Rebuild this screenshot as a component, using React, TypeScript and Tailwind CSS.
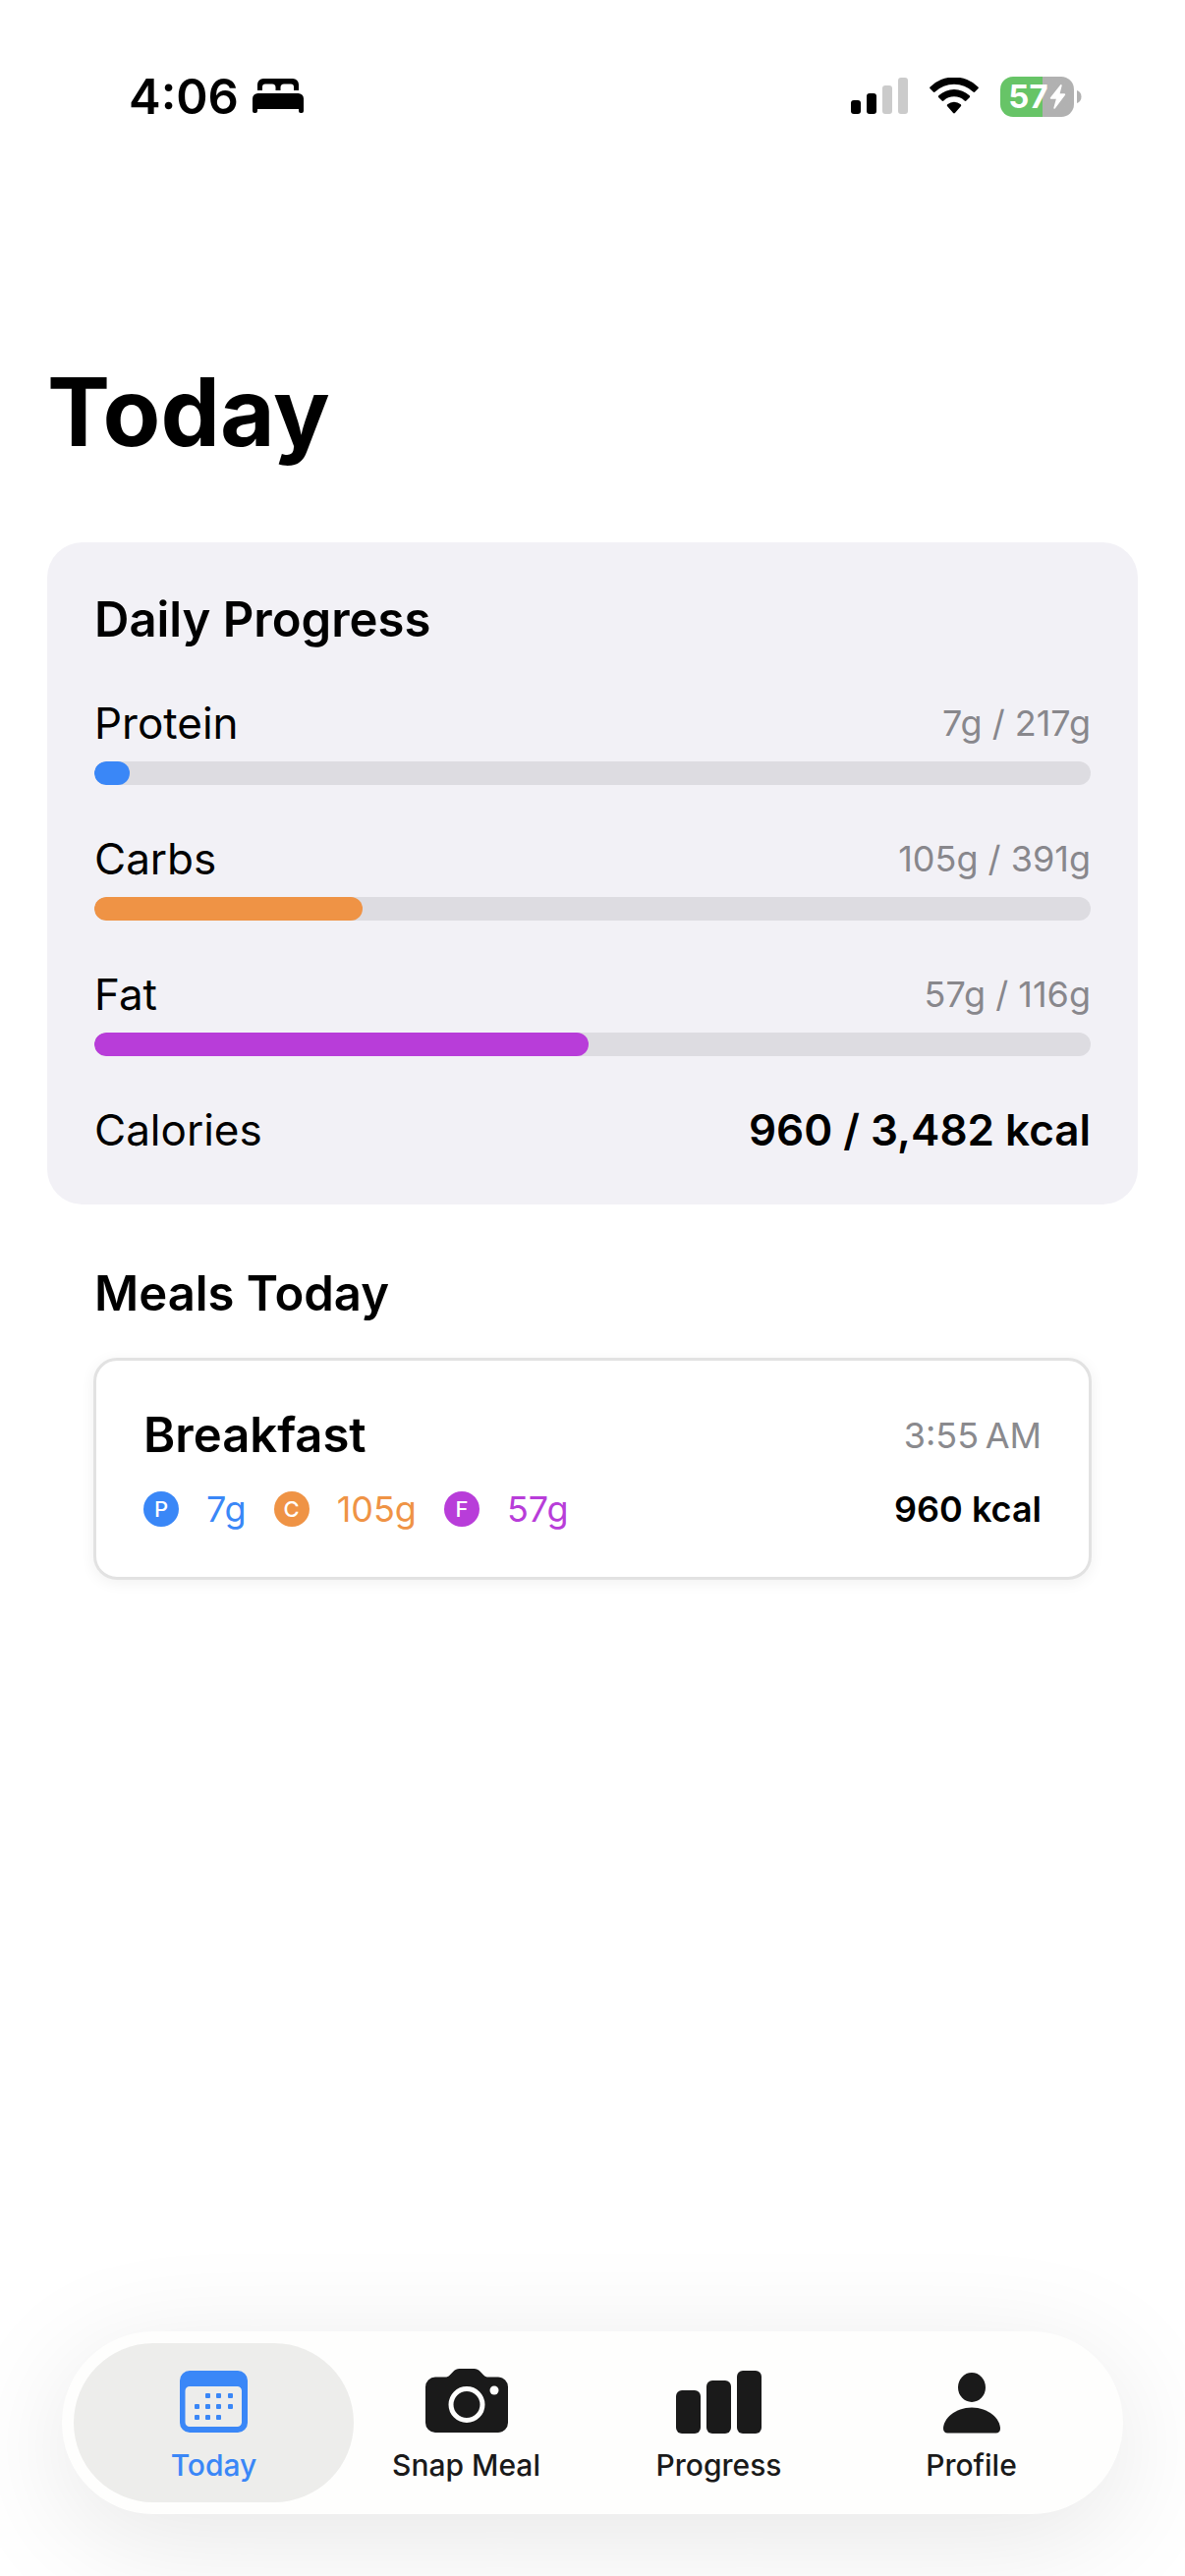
import React from 'react';

type Tone = 'blue' | 'orange' | 'purple';

const fill: Record<Tone, string> = {
  blue: 'bg-[#3a87f7]',
  orange: 'bg-[#ef9345]',
  purple: 'bg-[#b83dd9]',
};

const ink: Record<Tone, string> = {
  blue: 'text-[#3a87f7]',
  orange: 'text-[#ef9345]',
  purple: 'text-[#b83dd9]',
};

const goals: { name: string; value: string; percent: number; tone: Tone }[] = [
  { name: 'Protein', value: '7g / 217g', percent: 3.55, tone: 'blue' },
  { name: 'Carbs', value: '105g / 391g', percent: 26.9, tone: 'orange' },
  { name: 'Fat', value: '57g / 116g', percent: 49.6, tone: 'purple' },
];

const macros: { letter: string; amount: string; tone: Tone }[] = [
  { letter: 'P', amount: '7g', tone: 'blue' },
  { letter: 'C', amount: '105g', tone: 'orange' },
  { letter: 'F', amount: '57g', tone: 'purple' },
];

function BedIcon() {
  return (
    <svg width="52" height="36" viewBox="0 0 52 36" fill="currentColor" aria-hidden="true">
      <path d="M5 12V6a6 6 0 0 1 6-6h30a6 6 0 0 1 6 6v6h-5V8.500a3 3 0 0 0-3-3h-7a3.500 3.500 0 0 0-3.500 3.500v3h-5V9A3.500 3.500 0 0 0 20 5.500h-7a3 3 0 0 0-3 3V12z" />
      <path d="M0 20.500A5.500 5.500 0 0 1 5.500 15h41a5.500 5.500 0 0 1 5.500 5.500V33a2 2 0 0 1-2 2h-1a2 2 0 0 1-2-2v-2H5v2a2 2 0 0 1-2 2H2a2 2 0 0 1-2-2z" />
    </svg>
  );
}

function SignalIcon() {
  return (
    <svg width="58" height="38" viewBox="0 0 58 38" aria-hidden="true">
      <rect x="0" y="23" width="10" height="14" rx="3" />
      <rect x="16" y="16" width="10" height="21" rx="3" />
      <rect x="32" y="8" width="10" height="29" rx="3" fill="#cbcbcb" />
      <rect x="48" y="0" width="10" height="37" rx="3" fill="#cbcbcb" />
    </svg>
  );
}

function WifiIcon() {
  return (
    <svg width="50" height="38" viewBox="0 0 50 38" aria-hidden="true">
      <path d="M.6 9.400a35 35 0 0 1 48.800 0 1.300 1.300 0 0 1 0 1.900l-3.200 3.300a1.300 1.300 0 0 1-1.800 0 28 28 0 0 0-38.800 0 1.300 1.300 0 0 1-1.800 0L.6 11.300a1.300 1.300 0 0 1 0-1.900z" />
      <path d="M9.300 18.300a22.800 22.800 0 0 1 31.400 0 1.300 1.300 0 0 1 0 1.900l-3.300 3.300a1.300 1.300 0 0 1-1.800 0 15.500 15.500 0 0 0-21.200 0 1.300 1.300 0 0 1-1.800 0l-3.300-3.300a1.300 1.300 0 0 1 0-1.900z" />
      <path d="M18.200 27.300a10.400 10.400 0 0 1 13.600 0 1.300 1.300 0 0 1 0 1.900l-5.900 6.800a1.300 1.300 0 0 1-1.800 0l-5.900-6.800a1.300 1.300 0 0 1 0-1.900z" />
    </svg>
  );
}

function Battery() {
  return (
    <div className="flex items-center gap-[3px]">
      <div className="flex h-[41px] w-[75px] items-center justify-center gap-px rounded-[13px] bg-linear-to-r from-[#67c467] from-57% to-[#b1b1b1] to-57% text-white">
        <span className="text-[33px] leading-none font-bold">57</span>
        <svg width="17" height="25" viewBox="0 0 17 27" fill="currentColor" aria-hidden="true">
          <path d="M11.500.4a.9.9 0 0 1 1.500.9L10.800 10h5a1 1 0 0 1 .8 1.600L5.500 26.500a.9.900 0 0 1-1.500-.9L6.700 16H1.200a1 1 0 0 1-.8-1.600z" />
        </svg>
      </div>
      <svg width="5" height="13" viewBox="0 0 5 13" fill="#b1b1b1" aria-hidden="true">
        <path d="M0 0c3 1 4.500 3.500 4.500 6.500S3 12 0 13z" />
      </svg>
    </div>
  );
}

function CalendarIcon() {
  const dots = [
    [26, 23], [37, 23], [49, 23],
    [15, 34], [26, 34], [37, 34], [49, 34],
    [15, 45], [26, 45], [37, 45],
  ];
  return (
    <svg width="69" height="64" viewBox="0 0 69 64" fill="currentColor" aria-hidden="true">
      <path
        fillRule="evenodd"
        d="M10 0h49a10 10 0 0 1 10 10v43a10 10 0 0 1-10 10H10A10 10 0 0 1 0 53V10A10 10 0 0 1 10 0zm0 16a4.500 4.500 0 0 0-4.500 4.500v32A4.500 4.500 0 0 0 10 57h48.500a4.500 4.500 0 0 0 4.500-4.500v-32a4.500 4.500 0 0 0-4.500-4.500z"
      />
      {dots.map(([x, y]) => (
        <rect key={`${x}-${y}`} x={x} y={y} width="5" height="5" rx="1" />
      ))}
    </svg>
  );
}

function CameraIcon() {
  return (
    <svg width="84" height="66" viewBox="0 0 84 66" fill="currentColor" aria-hidden="true">
      <path d="M10 8.500h10c2 0 3.400-.6 4.800-2l3.600-3.700C30.300.8 32 0 34.500 0h15c2.500 0 4.200.8 6.100 2.800l3.600 3.700c1.400 1.400 2.800 2 4.800 2h10a10 10 0 0 1 10 10V55a10 10 0 0 1-10 10H10A10 10 0 0 1 0 55V18.500a10 10 0 0 1 10-10z" />
      <circle cx="42" cy="36.500" r="16" fill="none" stroke="#fefefd" strokeWidth="5" />
      <circle cx="70" cy="22" r="4.500" fill="#fefefd" />
    </svg>
  );
}

function BarsIcon() {
  return (
    <svg width="88" height="64" viewBox="0 0 88 64" fill="currentColor" aria-hidden="true">
      <rect x="0" y="20" width="25" height="44" rx="6" />
      <rect x="31" y="10" width="25" height="54" rx="6" />
      <rect x="62" y="0" width="25" height="64" rx="6" />
    </svg>
  );
}

function PersonIcon() {
  return (
    <svg width="58" height="62" viewBox="0 0 58 62" fill="currentColor" aria-hidden="true">
      <ellipse cx="29" cy="15" rx="14" ry="15" />
      <path d="M29 35.500c17 0 29 11.500 29 21.500 0 2.700-1.600 4.500-4.500 4.500h-49C1.600 61.500 0 59.700 0 57c0-10 12-21.500 29-21.500z" />
    </svg>
  );
}

const tabs = [
  { label: 'Today', Icon: CalendarIcon },
  { label: 'Snap Meal', Icon: CameraIcon },
  { label: 'Progress', Icon: BarsIcon },
  { label: 'Profile', Icon: PersonIcon },
];

function StatusBar() {
  return (
    <header className="flex h-[196px] items-start justify-between pt-[67px] pr-[105px] pl-[131px]">
      <div className="flex h-[62px] items-center gap-[14px]">
        <span className="text-[49px] leading-none font-semibold">4:06</span>
        <BedIcon />
      </div>
      <div className="flex h-[62px] items-center gap-[22px]">
        <SignalIcon />
        <WifiIcon />
        <Battery />
      </div>
    </header>
  );
}

function DailyProgress() {
  return (
    <section className="mx-12 rounded-[36px] bg-[#f2f1f6] p-12">
      <h2 className="text-[49px] leading-[62px] font-semibold">Daily Progress</h2>
      <div className="mt-[46px] flex flex-col gap-[47px]">
        {goals.map((goal) => (
          <div key={goal.name} className="flex flex-col gap-[11px]">
            <div className="flex items-center justify-between leading-[56px]">
              <span className="text-[44px]">{goal.name}</span>
              <span className="text-[36px] text-[#88878c]">{goal.value}</span>
            </div>
            <div
              className="h-6 overflow-hidden rounded-full bg-[#dddce1]"
              role="progressbar"
              aria-label={goal.name}
              aria-valuenow={goal.percent}
            >
              <div className={`h-full rounded-full ${fill[goal.tone]}`} style={{ width: `${goal.percent}%` }} />
            </div>
          </div>
        ))}
        <div className="flex items-center justify-between text-[44px] leading-[56px]">
          <span>Calories</span>
          <span className="font-semibold">960 / 3,482 kcal</span>
        </div>
      </div>
    </section>
  );
}

function Meals() {
  return (
    <section className="mx-24 mt-[60px]">
      <h2 className="text-[49px] leading-[62px] font-semibold">Meals Today</h2>
      <article className="-mx-px mt-[34px] rounded-3xl border-3 border-[#e2e2e2] bg-white px-12 py-[45px] shadow-[0_3px_15px_rgba(0,0,0,0.06)]">
        <div className="flex items-center justify-between">
          <h3 className="text-[49px] leading-[62px] font-semibold">Breakfast</h3>
          <time className="text-[36px] text-[#8a8a8e]">3:55&#8201;AM</time>
        </div>
        <div className="mt-5 flex items-center justify-between text-[36px] leading-[48px]">
          <ul className="flex items-center gap-7">
            {macros.map((macro) => (
              <li key={macro.letter} className={`flex items-center gap-7 ${ink[macro.tone]}`}>
                <span
                  className={`flex size-9 items-center justify-center rounded-full text-[22px] font-medium text-white ${fill[macro.tone]}`}
                >
                  {macro.letter}
                </span>
                {macro.amount}
              </li>
            ))}
          </ul>
          <span className="font-semibold">960 kcal</span>
        </div>
      </article>
    </section>
  );
}

function TabBar() {
  return (
    <nav className="mx-[63px] mt-auto mb-[63px] flex rounded-full bg-[#fefefd] p-3 shadow-[0_24px_120px_rgba(0,0,0,0.1)]">
      {tabs.map(({ label, Icon }, index) => (
        <button
          key={label}
          type="button"
          aria-current={index === 0 ? 'page' : undefined}
          className={`flex h-[162px] flex-1 flex-col items-center rounded-full pt-[26px] ${
            index === 0 ? 'bg-[#ededeb] text-[#3a87f7]' : '-ml-7 text-[#1a1a1a]'
          }`}
        >
          <span className="flex h-[66px] items-end">
            <Icon />
          </span>
          <span className="mt-3 text-[30px] leading-[40px] font-medium">{label}</span>
        </button>
      ))}
    </nav>
  );
}

export default function App() {
  return (
    <div className="flex min-h-screen flex-col bg-white font-['Inter',sans-serif] text-black">
      <StatusBar />
      <main>
        <h1 className="mt-40 mb-[70px] px-12 text-[96px] leading-[126px] font-bold">Today</h1>
        <DailyProgress />
        <Meals />
      </main>
      <TabBar />
    </div>
  );
}
